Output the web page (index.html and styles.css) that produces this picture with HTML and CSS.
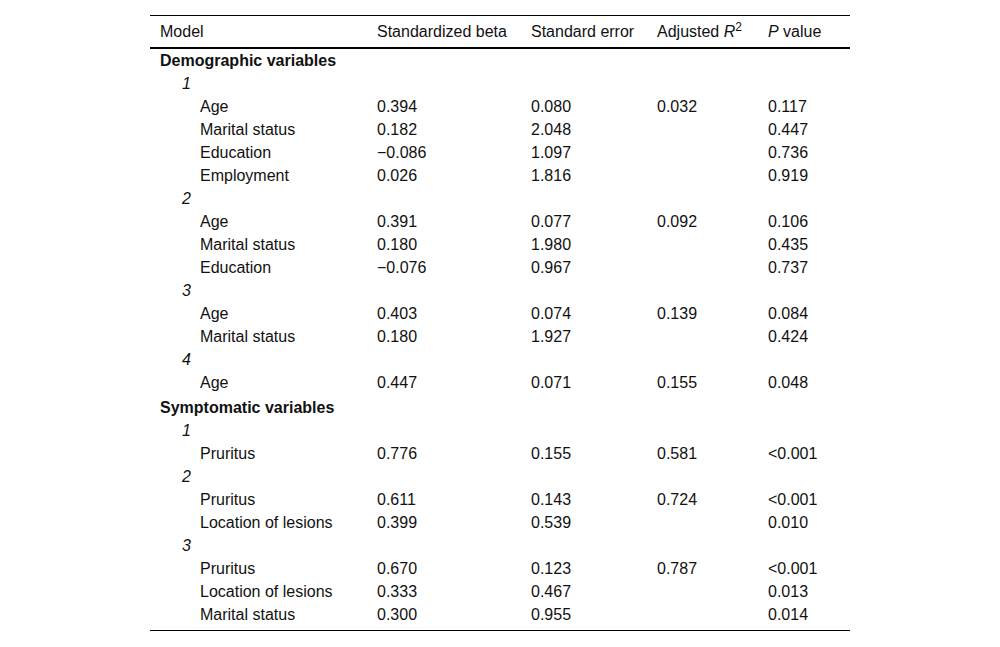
FILE: index.html
```html
<!DOCTYPE html>
<html>
<head>
<meta charset="utf-8">
<link rel="stylesheet" href="styles.css">
</head>
<body>
<table class="data">
  <colgroup>
    <col class="c1"><col class="c2"><col class="c3"><col class="c4"><col class="c5">
  </colgroup>
  <thead>
    <tr>
      <th>Model</th>
      <th>Standardized beta</th>
      <th>Standard error</th>
      <th>Adjusted <i>R</i><sup>2</sup></th>
      <th><i>P</i> value</th>
    </tr>
  </thead>
  <tbody>
    <tr class="section"><td colspan="5">Demographic variables</td></tr>
    <tr class="model"><td colspan="5">1</td></tr>
    <tr><td class="var">Age</td><td>0.394</td><td>0.080</td><td>0.032</td><td>0.117</td></tr>
    <tr><td class="var">Marital status</td><td>0.182</td><td>2.048</td><td></td><td>0.447</td></tr>
    <tr><td class="var">Education</td><td>−0.086</td><td>1.097</td><td></td><td>0.736</td></tr>
    <tr><td class="var">Employment</td><td>0.026</td><td>1.816</td><td></td><td>0.919</td></tr>
    <tr class="model"><td colspan="5">2</td></tr>
    <tr><td class="var">Age</td><td>0.391</td><td>0.077</td><td>0.092</td><td>0.106</td></tr>
    <tr><td class="var">Marital status</td><td>0.180</td><td>1.980</td><td></td><td>0.435</td></tr>
    <tr><td class="var">Education</td><td>−0.076</td><td>0.967</td><td></td><td>0.737</td></tr>
    <tr class="model"><td colspan="5">3</td></tr>
    <tr><td class="var">Age</td><td>0.403</td><td>0.074</td><td>0.139</td><td>0.084</td></tr>
    <tr><td class="var">Marital status</td><td>0.180</td><td>1.927</td><td></td><td>0.424</td></tr>
    <tr class="model"><td colspan="5">4</td></tr>
    <tr><td class="var">Age</td><td>0.447</td><td>0.071</td><td>0.155</td><td>0.048</td></tr>
    <tr class="section second"><td colspan="5">Symptomatic variables</td></tr>
    <tr class="model"><td colspan="5">1</td></tr>
    <tr><td class="var">Pruritus</td><td>0.776</td><td>0.155</td><td>0.581</td><td>&lt;0.001</td></tr>
    <tr class="model"><td colspan="5">2</td></tr>
    <tr><td class="var">Pruritus</td><td>0.611</td><td>0.143</td><td>0.724</td><td>&lt;0.001</td></tr>
    <tr><td class="var">Location of lesions</td><td>0.399</td><td>0.539</td><td></td><td>0.010</td></tr>
    <tr class="model"><td colspan="5">3</td></tr>
    <tr><td class="var">Pruritus</td><td>0.670</td><td>0.123</td><td>0.787</td><td>&lt;0.001</td></tr>
    <tr><td class="var">Location of lesions</td><td>0.333</td><td>0.467</td><td></td><td>0.013</td></tr>
    <tr class="last"><td class="var">Marital status</td><td>0.300</td><td>0.955</td><td></td><td>0.014</td></tr>
  </tbody>
</table>
</body>
</html>
```
FILE: styles.css
```css
html, body {
  margin: 0;
  padding: 0;
  background: #ffffff;
}

body {
  font-family: "Liberation Sans", Arial, sans-serif;
  font-size: 16px;
  color: #111111;
}

.data {
  width: 700px;
  margin: 15px auto 0;
  border-collapse: collapse;
  table-layout: fixed;
  border-top: 1px solid #000;
  border-bottom: 1px solid #000;
}

.c1 { width: 217px; }
.c2 { width: 154px; }
.c3 { width: 126px; }
.c4 { width: 111px; }
.c5 { width: 92px; }

.data th {
  font-weight: normal;
  text-align: left;
  line-height: 19px;
  padding: 6px 0 6px 10px;
  border-bottom: 2px solid #000;
  white-space: nowrap;
}

.data sup {
  font-size: 12px;
  line-height: 0;
  vertical-align: 0;
  position: relative;
  top: -6px;
}

.data td {
  line-height: 19px;
  padding: 2px 0 2px 10px;
  white-space: nowrap;
}

.data .section td {
  font-weight: bold;
}

.data .section.second td {
  padding-top: 4px;
}

.data .model td {
  font-style: italic;
  padding-left: 32px;
}

.data td.var {
  padding-left: 50px;
}

.data .last td {
  padding-bottom: 6px;
}
```
